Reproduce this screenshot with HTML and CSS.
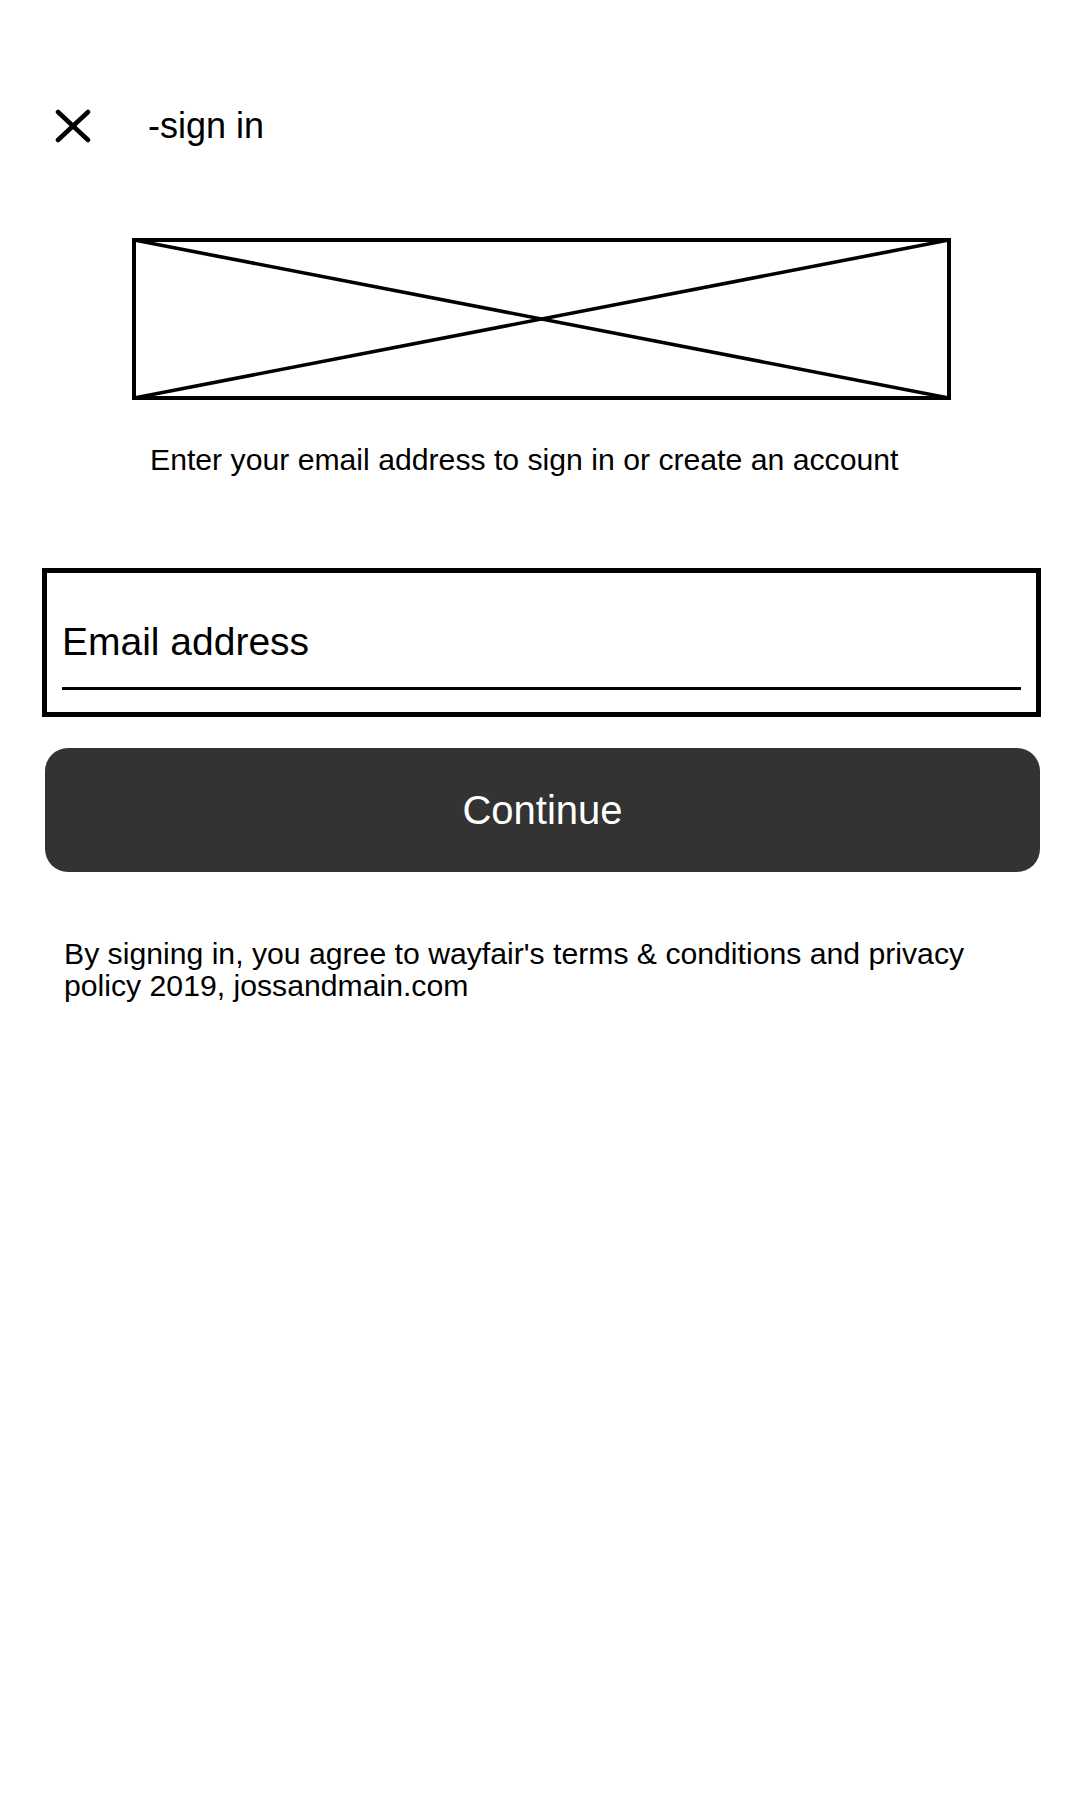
FILE: index.html
```html
<!DOCTYPE html>
<html lang="en">
<head>
<meta charset="utf-8">
<title>sign in</title>
<link rel="stylesheet" href="styles.css">
</head>
<body>
<div class="page">
  <header class="topbar">
    <svg class="close-icon" width="36" height="34" viewBox="0 0 36 34" aria-hidden="true">
      <line x1="3" y1="3" x2="33" y2="31" stroke="#000" stroke-width="4.5" stroke-linecap="round"/>
      <line x1="33" y1="3" x2="3" y2="31" stroke="#000" stroke-width="4.5" stroke-linecap="round"/>
    </svg>
    <span class="title">-sign in</span>
  </header>

  <div class="logo-placeholder">
    <svg class="ph-lines" viewBox="0 0 100 100" preserveAspectRatio="none" aria-hidden="true">
      <line x1="0" y1="0" x2="100" y2="100" stroke="#000" stroke-width="3.6" vector-effect="non-scaling-stroke"/>
      <line x1="100" y1="0" x2="0" y2="100" stroke="#000" stroke-width="3.6" vector-effect="non-scaling-stroke"/>
    </svg>
  </div>

  <p class="subtitle">Enter your email address to sign in or create an account</p>

  <div class="field">
    <div class="field-label">Email address</div>
    <div class="field-line"></div>
  </div>

  <button class="continue-btn" type="button">Continue</button>

  <p class="legal">By signing in, you agree to wayfair's terms &amp; conditions and privacy policy 2019, jossandmain.com</p>
</div>
</body>
</html>
```

FILE: styles.css
```css
html, body {
  margin: 0;
  padding: 0;
  background: #ffffff;
}

body {
  font-family: "Liberation Sans", Arial, sans-serif;
  color: #000;
}

.page {
  width: 1080px;
  min-height: 1800px;
  display: flex;
  flex-direction: column;
}

.topbar {
  display: flex;
  align-items: center;
  padding: 109px 0 0 55px;
  height: 34px;
}

.close-icon {
  display: block;
  flex: none;
}

.title {
  margin-left: 57px;
  font-size: 36px;
  line-height: 36px;
}

.logo-placeholder {
  margin: 95px 0 0 132px;
  width: 819px;
  height: 162px;
  box-sizing: border-box;
  border: 4px solid #000;
  position: relative;
}

.ph-lines {
  position: absolute;
  left: -2px;
  top: -2px;
  width: calc(100% + 4px);
  height: calc(100% + 4px);
}

.subtitle {
  margin: 42px 0 0 150px;
  font-size: 30.2px;
  line-height: 36px;
}

.field {
  margin: 90px 0 0 42px;
  width: 999px;
  height: 149px;
  box-sizing: border-box;
  border: 5px solid #000;
  padding: 48px 15px 0 15px;
}

.field-label {
  font-size: 39px;
  line-height: 42px;
}

.field-line {
  margin-top: 24px;
  height: 3px;
  background: #000;
}

.continue-btn {
  margin: 31px 0 0 45px;
  width: 995px;
  height: 124px;
  border: none;
  border-radius: 23px;
  background: #333333;
  color: #ffffff;
  font-family: "Liberation Sans", Arial, sans-serif;
  font-size: 40px;
  padding: 0;
  display: flex;
  align-items: center;
  justify-content: center;
}

.legal {
  margin: 66px 0 0 0;
  padding: 0 64px;
  font-size: 30.2px;
  line-height: 32px;
}
```
